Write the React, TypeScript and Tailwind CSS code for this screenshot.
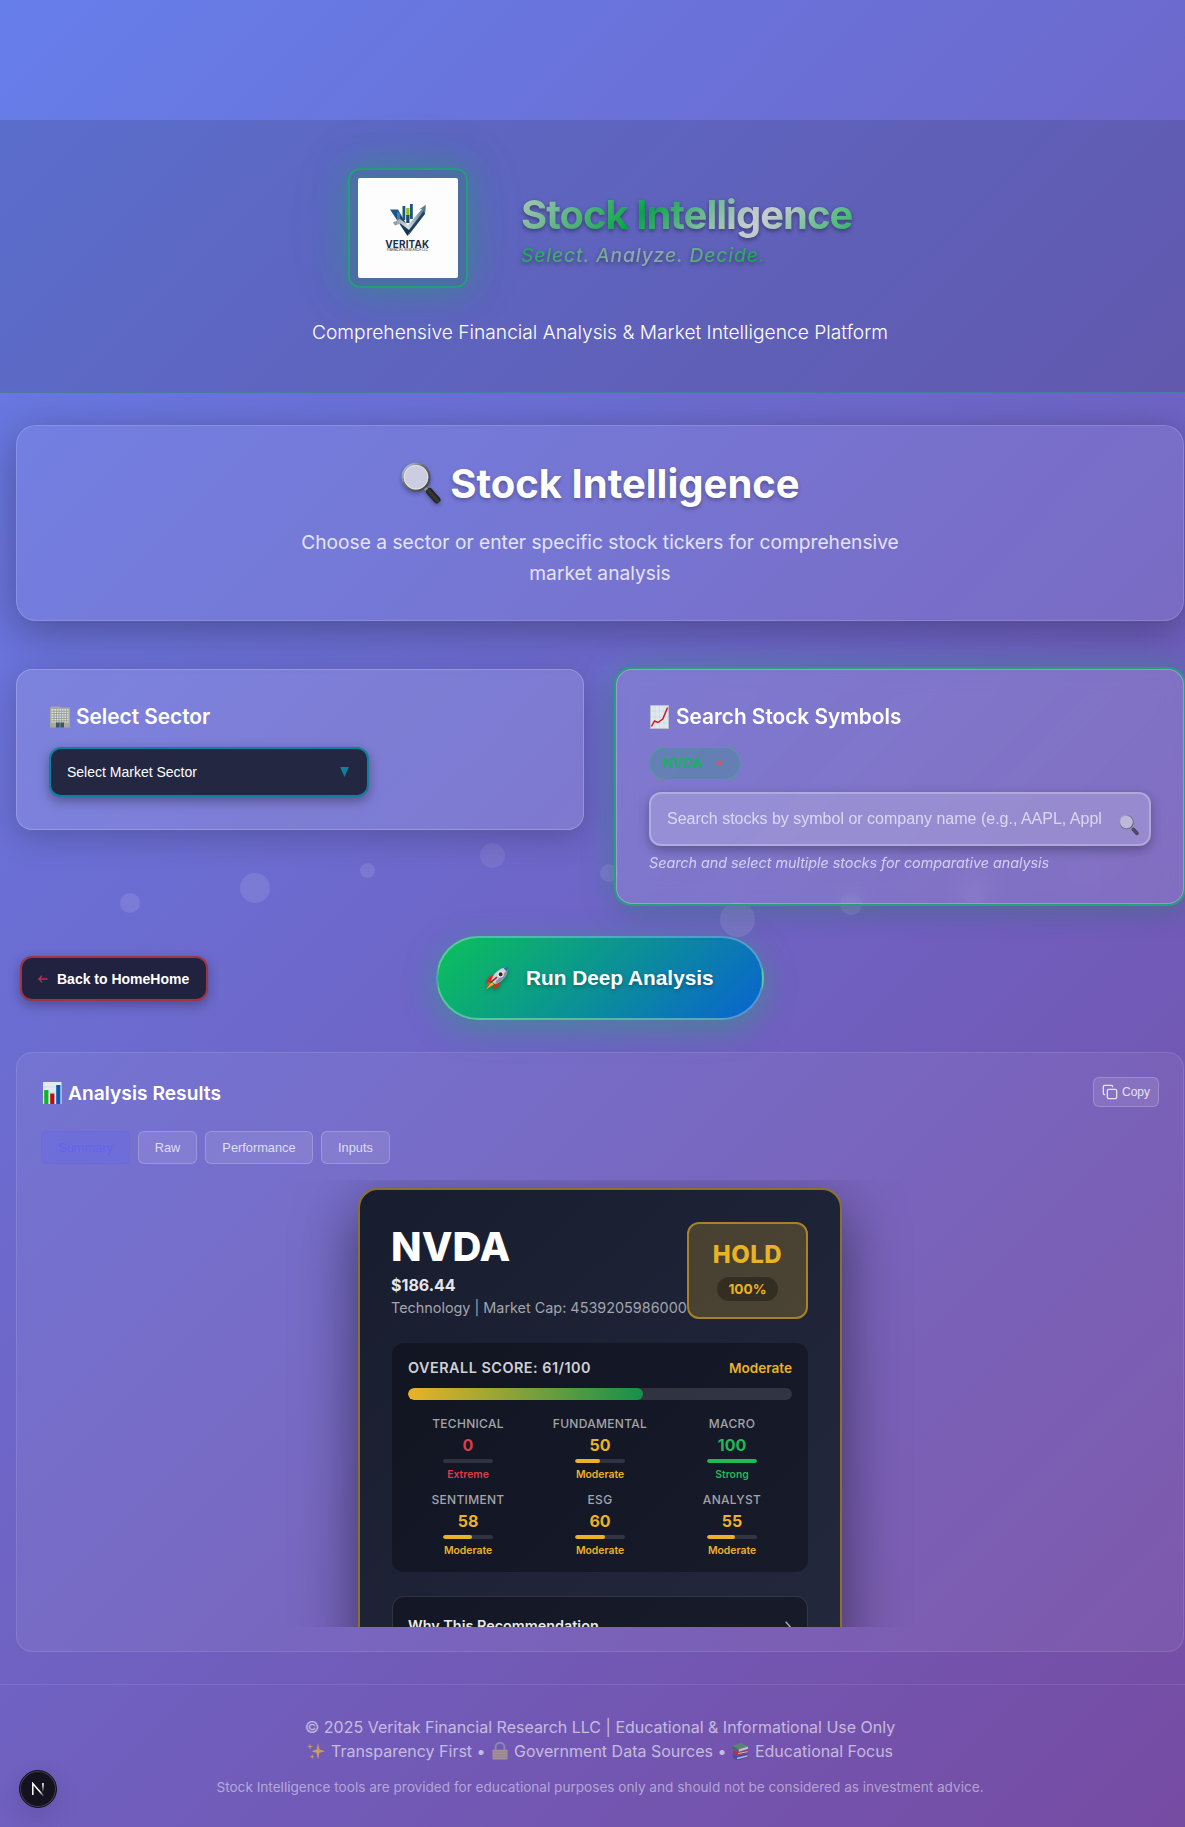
import React from "react";

type Box = { className?: string };

const Magnifier = ({ className }: Box) => (
  <svg viewBox="0 0 40 44" className={className} aria-hidden="true">
    <defs>
      <linearGradient id="rim" x1="0" y1="0" x2="1" y2="1">
        <stop offset="0" stopColor="#bfe0f5" />
        <stop offset="0.4" stopColor="#6c7070" />
        <stop offset="1" stopColor="#3c4040" />
      </linearGradient>
      <linearGradient id="handle" x1="0" y1="1" x2="1" y2="0">
        <stop offset="0" stopColor="#101010" />
        <stop offset="0.5" stopColor="#3a3a3a" />
        <stop offset="1" stopColor="#050505" />
      </linearGradient>
    </defs>
    <path d="M23.5 26.5 L29 31.5" stroke="#9a9a9a" strokeWidth="3.4" />
    <path d="M28.5 30.5 L36 39" stroke="url(#handle)" strokeWidth="7" strokeLinecap="round" />
    <circle cx="15" cy="16.2" r="13.4" fill="#cdcde2" stroke="url(#rim)" strokeWidth="2.2" />
    <circle cx="15" cy="16.2" r="11.8" fill="none" stroke="#e9e9ee" strokeWidth="0.8" />
  </svg>
);

const Building = ({ className }: Box) => (
  <svg viewBox="0 0 22 22" className={className} aria-hidden="true">
    <path d="M2 0.5h9v1h10v20H1V1.5h1z" fill="#a9a99b" />
    <path d="M2.5 3h17v13.5h-17z" fill="#d7e2e0" />
    <path d="M2.5 5.2h17M2.5 7.6h17M2.5 10h17M2.5 12.4h17M2.5 14.8h17" stroke="#8c8f88" strokeWidth="0.8" />
    <path d="M5 3v13.5M7.5 3v13.5M10 3v13.5M12.5 3v13.5M15 3v13.5M17.5 3v13.5" stroke="#8c8f88" strokeWidth="0.6" />
    <path d="M7 16.5h8v5H7z" fill="#3b5560" />
    <path d="M11 16.5v5" stroke="#a9a99b" strokeWidth="0.7" />
  </svg>
);

const ChartUp = ({ className }: Box) => (
  <svg viewBox="0 0 19 24" preserveAspectRatio="none" className={className} aria-hidden="true">
    <rect x="0.4" y="0.4" width="18.2" height="23.2" fill="#dfe8ef" stroke="#b8c2cc" strokeWidth="0.8" />
    <path d="M5 1v22M9.5 1v22M14 1v22M1 6h17M1 12h17M1 18h17" stroke="#c8d4de" strokeWidth="0.6" />
    <path d="M1.5 21.5L4.5 16L8 17.5L12.8 14L17.6 2.5" fill="none" stroke="#cf1626" strokeWidth="1.5" />
  </svg>
);

const BarChart = ({ className }: Box) => (
  <svg viewBox="0 0 19 22" className={className} aria-hidden="true">
    <rect width="18.5" height="22" fill="#e2ebf2" />
    <path d="M0 5h18.5M0 10h18.5M0 15h18.5" stroke="#c4d0da" strokeWidth="0.6" />
    <rect x="1.2" y="8" width="4.2" height="14" fill="#07b91c" />
    <rect x="7.2" y="11.5" width="4.2" height="10.5" fill="#c10a14" />
    <rect x="13.2" y="3" width="4.2" height="19" fill="#0a57b8" />
  </svg>
);

const Rocket = ({ className }: Box) => (
  <svg viewBox="0 0 26 26" className={className} aria-hidden="true">
    <path d="M8 15L1.5 17.5L6 10.5L11 9.5zM11.5 18L9 25L16 20.5L17 15z" fill="#d92a1c" />
    <path d="M8 16.5L2 24.5L10.5 19z" fill="#ffb01f" />
    <path d="M7 18L1.5 22L5 16.5z" fill="#f0501c" />
    <path d="M7.5 15.5C9.5 8 15 2 25 1C24.6 11 18.5 16.5 11.5 19z" fill="#c6d3e0" />
    <path d="M20 1.8C22 1.2 23.5 1 25 1C25 3 24.6 4.8 24 6.4z" fill="#2d69b0" />
    <path d="M11.5 19C18.5 16.5 24 11 24.6 4L13 15z" fill="#8495aa" />
    <circle cx="17.3" cy="8.7" r="2.7" fill="#501820" stroke="#edf2f7" strokeWidth="1.1" />
    <path d="M7 17L13.5 11.5" stroke="#b61c1c" strokeWidth="1.6" />
  </svg>
);

const Sparkles = ({ className }: Box) => (
  <svg viewBox="0 0 18 18" className={className} aria-hidden="true">
    <path d="M11 1L12.4 7.6L18 9.2L12.4 10.8L11 17.5L9.6 10.8L4.5 9.2L9.6 7.6zM3 1.5L3.7 3.9L6 4.6L3.7 5.3L3 7.6L2.3 5.3L0 4.6L2.3 3.9zM5.2 12.2L5.8 14.1L7.6 14.7L5.8 15.3L5.2 17.3L4.6 15.3L2.8 14.7L4.6 14.1z" fill="#f7b733" />
  </svg>
);

const Lock = ({ className }: Box) => (
  <svg viewBox="0 0 16 18" className={className} aria-hidden="true">
    <path d="M3.6 8.5V5a4.4 4.2 0 0 1 8.8 0v3.5" fill="none" stroke="#8f9bab" strokeWidth="1.9" />
    <rect x="0.5" y="7.8" width="15" height="9.8" rx="0.8" fill="#b5a48e" />
    <path d="M0.5 10.2h15M0.5 12.7h15M0.5 15.2h15" stroke="#998873" strokeWidth="0.6" />
  </svg>
);

const Books = ({ className }: Box) => (
  <svg viewBox="0 0 18 18" className={className} aria-hidden="true">
    <path d="M1 3.5L10 0.5L17 4L7.5 7z" fill="#4f9a5c" />
    <path d="M1 3.5L7.5 7L8 9.5L1.5 6z" fill="#2f7340" />
    <path d="M7.5 7L17 4V6.3L8 9.3z" fill="#e8e4da" />
    <path d="M2 8L8 9.6L16.5 7.5V10.5L7 13L2 11.5z" fill="#c4222c" />
    <path d="M7 11L16.5 9.2" stroke="#efe6e0" />
    <path d="M1 12L7 13.4L16.5 11V15L6 17.8L2.5 15.5z" fill="#2c4c9c" />
    <path d="M6 16L16.5 13.4" stroke="#e6e6ee" strokeWidth="1.3" />
  </svg>
);

const VeritakMark = () => (
  <svg viewBox="0 0 100 100" className="h-[100px] w-[100px] rounded-[2px] bg-[#fdfdfd]" aria-label="Veritak">
    <defs>
      <linearGradient id="vl" x1="0" y1="0" x2="1" y2="1">
        <stop offset="0" stopColor="#1e5f94" />
        <stop offset="1" stopColor="#10253f" />
      </linearGradient>
      <linearGradient id="silver" x1="0" y1="0" x2="1" y2="0">
        <stop offset="0" stopColor="#8b8f94" />
        <stop offset="0.45" stopColor="#dcdee0" />
        <stop offset="1" stopColor="#4f6f88" />
      </linearGradient>
    </defs>
    <path d="M32 31.5H40L50 49L60 40L49.5 58z" fill="url(#vl)" />
    <path d="M44.5 28h2.8v14h-2.8zM52 26h2.8v15H52z" fill="#1c5585" />
    <path d="M39 34h3v10h-3z" fill="#3a82b5" />
    <path d="M48.2 30h3.3v8h-3.3z" fill="#93bf1d" />
    <path d="M48.2 37h3.3v8h-3.3z" fill="#1d4a6c" />
    <path d="M57 41L65.8 30L67.5 27L67 36L50 58z" fill="#1d4365" />
    <path d="M35 44.5L42 41L50 47L64 31L60.8 31.5L67.5 27L67 36L65.7 33L51 52L42.5 45.5L37 47.5z" fill="url(#silver)" />
    <text x="49.2" y="69.5" textAnchor="middle" fontFamily="Inter, sans-serif" fontWeight="700" fontSize="9.9" textLength="44" fill="#1c3150">VERITAK</text>
    <text x="49.2" y="73.2" textAnchor="middle" fontFamily="Inter, sans-serif" fontWeight="500" fontSize="3.1" textLength="41" lengthAdjust="spacingAndGlyphs" fill="#333a44">FINANCIAL RESEARCH LLC</text>
  </svg>
);

const bubbles = [
  "left-[120px] top-[893px] h-5 w-5 bg-white/10",
  "left-[240px] top-[873px] h-[30px] w-[30px] bg-white/10",
  "left-[360px] top-[863px] h-[15px] w-[15px] bg-white/10",
  "left-[480px] top-[843px] h-[25px] w-[25px] bg-white/8",
  "left-[600px] top-[864px] h-[18px] w-[18px] bg-white/10",
  "left-[720px] top-[902px] h-[35px] w-[35px] bg-white/10",
  "left-[840px] top-[893px] h-[22px] w-[22px] bg-white/10",
  "left-[960px] top-[875px] h-[28px] w-[28px] bg-white/7",
  "left-[1080px] top-[862px] h-[16px] w-[16px] bg-white/5",
];

type Metric = { name: string; value: number; level: string; text: string; bar: string };
const metrics: Metric[] = [
  { name: "TECHNICAL", value: 0, level: "Extreme", text: "text-[#dc3c46]", bar: "bg-[#dc3c46]" },
  { name: "FUNDAMENTAL", value: 50, level: "Moderate", text: "text-[#eab226]", bar: "bg-[#eab226]" },
  { name: "MACRO", value: 100, level: "Strong", text: "text-[#20b858]", bar: "bg-[#20b858]" },
  { name: "SENTIMENT", value: 58, level: "Moderate", text: "text-[#eab226]", bar: "bg-[#eab226]" },
  { name: "ESG", value: 60, level: "Moderate", text: "text-[#eab226]", bar: "bg-[#eab226]" },
  { name: "ANALYST", value: 55, level: "Moderate", text: "text-[#eab226]", bar: "bg-[#eab226]" },
];

function Header() {
  return (
    <header className="mt-[120px] flex h-[273px] flex-col items-center border-b border-[#4a7aa6] bg-[#1a1a2e]/15 pt-12">
      <div className="flex h-[120px] items-center gap-[53px]">
        <div className="flex h-[120px] w-[120px] items-center justify-center rounded-xl border-2 border-[#259c7c] bg-[#148c50]/25 shadow-[0_0_30px_rgba(34,160,110,0.5),0_0_60px_rgba(34,160,110,0.15)]">
          <VeritakMark />
        </div>
        <div className="flex w-[331px] flex-col pt-1">
          <div className="bg-[linear-gradient(135deg,#b4cbc2_0%,#8fbfa5_8%,#08a548_38%,#c4cbd0_68%,#c4cbd0_72%,#24b45c_100%)] bg-clip-text text-[40px] leading-[48px] font-bold tracking-[-1px] whitespace-nowrap text-transparent [filter:drop-shadow(0_2px_2px_rgba(0,0,0,0.4))]">
            Stock Intelligence
          </div>
          <div className="w-[250px] bg-[linear-gradient(135deg,#0aa84a_0%,#8fa9ae_42%,#8fa9ae_54%,#0aa84a_95%)] bg-clip-text pt-[2px] text-[19.2px] leading-[29px] font-medium tracking-[0.9px] whitespace-nowrap text-transparent italic [filter:drop-shadow(0_2px_2px_rgba(0,0,0,0.4))]">
            Select. Analyze. Decide.
          </div>
        </div>
      </div>
      <p className="mt-8 text-[19.2px] leading-6 font-light text-white">Comprehensive Financial Analysis &amp; Market Intelligence Platform</p>
    </header>
  );
}

function Hero() {
  return (
    <section className="mt-8 flex h-[196px] flex-col items-center rounded-[20px] border border-white/15 bg-white/7 pt-[33px] shadow-[0_10px_40px_rgba(0,0,0,0.3)]">
      <h1 className="flex h-[50px] items-center text-[40px] leading-[50px] font-bold whitespace-nowrap text-white [text-shadow:0_2px_4px_rgba(0,0,0,0.3)]">
        <Magnifier className="-mt-[2px] mr-[8px] h-[44px] w-[42px] drop-shadow-[0_2px_2px_rgba(0,0,0,0.3)]" />
        Stock Intelligence
      </h1>
      <p className="mt-[18px] w-[620px] text-center text-[19.2px] leading-[31px] text-white/80">
        Choose a sector or enter specific stock tickers for comprehensive market analysis
      </p>
    </section>
  );
}

function Selectors() {
  return (
    <section className="mt-12 grid h-[235px] grid-cols-2 items-start gap-8">
      <div className="h-[161px] rounded-2xl border border-white/20 bg-white/12 px-8 pt-8 shadow-[0_8px_32px_rgba(0,0,0,0.2)]">
        <h3 className="flex h-[29px] items-center text-[20.8px] font-semibold text-white">
          <Building className="mr-[5px] h-[24px] w-[22px]" />
          Select Sector
        </h3>
        <button className="mt-4 flex h-[50px] w-80 items-center justify-between rounded-xl border-2 border-[#0e7f9c] bg-[#232742] px-4 font-['Liberation_Sans',sans-serif] text-[14px] font-medium text-white shadow-[0_4px_12px_rgba(0,0,0,0.35)]">
          Select Market Sector
          <svg viewBox="0 0 8 9" className="mr-0.5 h-[10px] w-[9px]" aria-hidden="true"><path d="M0 0h8L4 9z" fill="#0e7f9c" /></svg>
        </button>
      </div>
      <div className="relative h-[235px] rounded-2xl border border-white/25 bg-white/12 px-8 pt-8 shadow-[0_0_0_2px_#2a9c80,0_0_30px_rgba(42,156,128,0.5),0_8px_32px_rgba(0,0,0,0.12)] backdrop-blur-[10px]">
        <h3 className="flex h-[29px] items-center text-[20.8px] font-semibold text-white">
          <ChartUp className="mr-[7px] ml-[1px] h-[24px] w-[19px]" />
          Search Stock Symbols
        </h3>
        <span className="mt-4 flex h-[33px] w-[92px] items-center rounded-[18px] border border-[#4f9c9c] bg-[#3c8c8c]/40 pl-[13px] text-[13.6px] font-semibold text-[#10b858]">
          NVDA
          <svg viewBox="0 0 6 6" className="-mt-[2px] ml-[14px] h-[6px] w-[6px]" aria-hidden="true"><path d="M.6.6l4.8 4.8M5.4.6L.6 5.4" stroke="#d65566" strokeWidth="1.7" /></svg>
        </span>
        <div className="mt-3 flex h-[54px] items-center justify-between rounded-xl border-2 border-white/25 bg-white/18 pr-[10px] pl-4 shadow-[0_4px_12px_rgba(0,0,0,0.3)]">
          <span className="w-[436px] overflow-hidden font-['Liberation_Sans',sans-serif] text-base whitespace-nowrap text-white/65">
            Search stocks by symbol or company name (e.g., AAPL, Appl
          </span>
          <Magnifier className="mt-3 h-[22px] w-[20px] opacity-70" />
        </div>
        <p className="mt-[7px] text-[14.4px] leading-[20px] tracking-[-0.04px] text-white/65 italic">Search and select multiple stocks for comparative analysis</p>
      </div>
    </section>
  );
}

function Actions() {
  return (
    <section className="mt-8 grid h-[84px] grid-cols-[1fr_auto_1fr] items-center">
      <button className="mt-px ml-1 flex h-[45px] w-[188px] items-center rounded-xl border-2 border-[#9c3546] bg-[#20223f] pt-px pl-4 font-['Liberation_Sans',sans-serif] text-[14px] font-bold whitespace-nowrap text-white shadow-[0_4px_12px_rgba(0,0,0,0.3)]">
        <svg viewBox="0 0 10 8" className="mr-[9px] h-2 w-[10px] shrink-0" fill="none" stroke="#a83a4a" strokeWidth="1.3" aria-hidden="true"><path d="M9.5 4H1M4 .8L.8 4L4 7.2" /></svg>
        <span>Back to HomeHome</span>
      </button>
      <button className="flex h-[84px] w-[328px] items-center rounded-full border-2 border-white/30 bg-[linear-gradient(135deg,#0cc05a,#0a63d0)] pl-[46px] font-['Liberation_Sans',sans-serif] text-[20.8px] font-bold whitespace-nowrap text-white shadow-[0_8px_30px_rgba(30,170,110,0.5)] [text-shadow:0_2px_4px_rgba(0,0,0,0.3)]">
        <Rocket className="mr-[17px] h-[25px] w-[25px] drop-shadow-[0_2px_2px_rgba(0,0,0,0.3)]" />
        Run Deep Analysis
      </button>
    </section>
  );
}

function ReportCard() {
  return (
    <article className="mx-auto mt-2 h-[700px] w-[484px] rounded-[20px] border-2 border-[#8c7030] bg-[linear-gradient(135deg,#171c2e_0%,#1f2438_50%,#252b40_100%)] px-8 pt-8 shadow-[0_20px_60px_rgba(0,0,0,0.5)]">
      <div className="flex h-[97px] justify-between">
        <div className="-ml-px w-[295px] pt-px whitespace-nowrap">
          <div className="text-[40px] leading-[48px] font-extrabold text-white">NVDA</div>
          <div className="mt-[3px] text-base leading-[22px] font-bold text-[#e6e6ea]">$186.44</div>
          <div className="mt-[2px] text-[14.4px] leading-[20px] text-[#a3a4ac]">Technology | Market Cap: 4539205986000</div>
        </div>
        <div className="flex w-[121px] shrink-0 flex-col items-center rounded-xl border-2 border-[#a5832b] bg-[#eab226]/22 pt-[15px]">
          <div className="text-[24px] leading-8 font-extrabold tracking-[0.5px] text-[#eab226]">HOLD</div>
          <div className="mt-[6px] h-6 w-[61px] rounded-full bg-black/30 text-center text-[13.6px] leading-6 font-bold text-[#eab226]">100%</div>
        </div>
      </div>
      <div className="mt-6 h-[229px] rounded-xl bg-black/30 px-4 pt-4">
        <div className="flex items-center justify-between leading-[18px]">
          <span className="text-[14.4px] font-semibold tracking-[0.5px] text-[#d0d1d5]">OVERALL SCORE: 61/100</span>
          <span className="text-[13.6px] font-semibold text-[#eab226]">Moderate</span>
        </div>
        <div className="mt-[11px] h-3 overflow-hidden rounded-full bg-white/12">
          <div className="h-full w-[61.2%] rounded-full bg-[linear-gradient(90deg,#eab226,#15904c)]" />
        </div>
        <div className="mt-4 grid grid-cols-3 gap-3">
          {metrics.map((m) => (
            <div key={m.name} className="flex h-16 flex-col items-center">
              <span className="text-[12px] leading-4 font-medium tracking-[0.3px] text-[#a3a4aa]">{m.name}</span>
              <span className={`mt-[3px] text-base leading-5 font-bold ${m.text}`}>{m.value}</span>
              <span className="mt-1 block h-1 w-[50px] shrink-0 overflow-hidden rounded-sm bg-white/12">
                <span className={`block h-full rounded-sm ${m.bar}`} style={{ width: `${m.value}%` }} />
              </span>
              <span className={`mt-[5px] text-[10.4px] leading-[14px] font-semibold ${m.text}`}>{m.level}</span>
            </div>
          ))}
        </div>
      </div>
      <div className="mt-6 flex h-[70px] items-start justify-between rounded-xl border border-white/12 bg-black/30 pt-[19px] pr-4 pl-[15px]">
        <span className="text-[14.4px] leading-5 font-semibold text-[#eaeaee]">Why This Recommendation</span>
        <svg viewBox="0 0 6 11" className="mt-[5px] h-[11px] w-[6px]" fill="none" stroke="#a3a4aa" strokeWidth="1.6" aria-hidden="true"><path d="M.7.7L5 5.5L.7 10.3" /></svg>
      </div>
    </article>
  );
}

function Results() {
  const tab = "flex h-[33px] items-center justify-center rounded-md border font-['Liberation_Sans',sans-serif] text-[12.8px]";
  return (
    <section className="mt-8 h-[600px] rounded-2xl border border-white/10 bg-white/6 px-6 pt-6">
      <div className="flex h-8 items-start justify-between">
        <h2 className="flex h-8 items-center text-[19.2px] font-semibold tracking-[0.03px] text-white">
          <BarChart className="mr-[6px] ml-0.5 h-[22px] w-[19px]" />
          Analysis Results
        </h2>
        <button className="flex h-[30px] w-[66px] items-center rounded-md border border-white/20 bg-white/10 pl-2 font-['Liberation_Sans',sans-serif] text-[12px] text-white/80">
          <svg viewBox="0 0 24 24" className="mr-1 h-4 w-4" fill="none" stroke="currentColor" strokeWidth="2" strokeLinecap="round" strokeLinejoin="round" aria-hidden="true"><rect width="14" height="14" x="8" y="8" rx="2" /><path d="M4 16c-1.1 0-2-.9-2-2V4c0-1.1.9-2 2-2h10c1.1 0 2 .9 2 2" /></svg>
          Copy
        </button>
      </div>
      <div className="mt-[22px] flex gap-2">
        <button className={`${tab} w-[89px] border-[#6466e1]/40 bg-[#6366f1]/30 text-[#6265ec]`}>Summary</button>
        <button className={`${tab} w-[59px] border-white/20 bg-white/10 text-white/75`}>Raw</button>
        <button className={`${tab} w-[108px] border-white/20 bg-white/10 text-white/75`}>Performance</button>
        <button className={`${tab} w-[69px] border-white/20 bg-white/10 text-white/75`}>Inputs</button>
      </div>
      <div className="mt-4 h-[447px] overflow-hidden">
        <ReportCard />
      </div>
    </section>
  );
}

function Footer() {
  return (
    <footer className="relative mt-8 flex h-[143px] flex-col items-center border-t border-white/10 pt-[30px]">
      <p className="text-base leading-6 text-white/60">© 2025 Veritak Financial Research LLC | Educational &amp; Informational Use Only</p>
      <p className="flex items-center text-base leading-6 whitespace-pre text-white/60">
        <Sparkles className="mr-1.5 h-[18px] w-[18px] opacity-70" />
        Transparency First •{" "}
        <Lock className="mr-[6px] ml-0.5 h-[20px] w-4 opacity-75" />
        Government Data Sources •{" "}
        <Books className="mr-[6px] h-[19px] w-[18px] opacity-70" />
        Educational Focus
      </p>
      <p className="mt-[14px] text-[13.6px] leading-5 text-white/48">
        Stock Intelligence tools are provided for educational purposes only and should not be considered as investment advice.
      </p>
      <div className="absolute top-[85px] left-[19px] flex h-[38px] w-[38px] items-center justify-center rounded-full border border-[#15131f] bg-[#14121f] shadow-[inset_0_0_0_1px_#464351,0_8px_24px_rgba(0,0,0,0.12)]">
        <svg viewBox="0 0 14 14" className="h-[14px] w-[14px]" fill="none" aria-hidden="true">
          <defs>
            <linearGradient id="stem" x1="0" y1="0" x2="0" y2="1"><stop offset="0.2" stopColor="#fff" /><stop offset="1" stopColor="#fff" stopOpacity="0" /></linearGradient>
            <linearGradient id="slash" x1="0" y1="0" x2="1" y2="1"><stop offset="0.65" stopColor="#fff" /><stop offset="1" stopColor="#fff" stopOpacity="0.1" /></linearGradient>
          </defs>
          <path d="M1.8 13V1.5L12.6 14" stroke="url(#slash)" strokeWidth="1.5" />
          <path d="M11.2 1h1.5v9h-1.5z" fill="url(#stem)" />
        </svg>
      </div>
    </footer>
  );
}

export default function App() {
  return (
    <div className="h-[1827px] w-full overflow-hidden font-['Inter',sans-serif]">
      <div className="relative h-[1827px] w-[1200px] overflow-hidden bg-[linear-gradient(135deg,#667eea_0%,#764ba2_100%)]">
        {bubbles.map((b) => (
          <span key={b} className={`absolute rounded-full ${b}`} />
        ))}
        <div className="relative flow-root">
          <Header />
          <main className="px-4">
            <Hero />
            <Selectors />
            <Actions />
            <Results />
          </main>
          <Footer />
        </div>
      </div>
    </div>
  );
}
